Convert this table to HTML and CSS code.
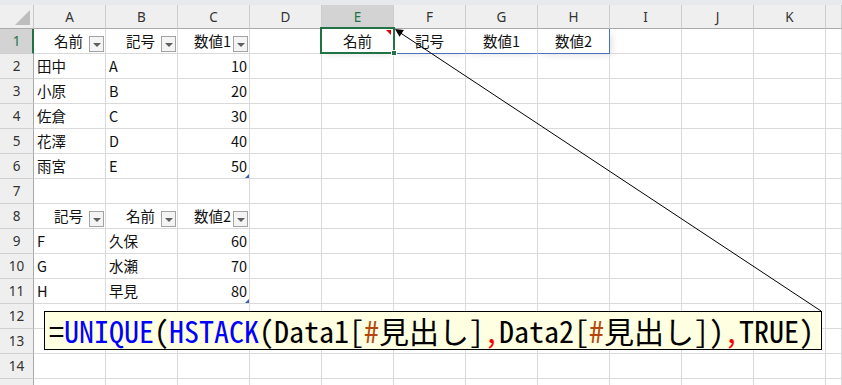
FILE: index.html
```html
<!DOCTYPE html>
<html lang="ja">
<head>
<meta charset="utf-8">
<title>Sheet</title>
<link rel="stylesheet" href="styles.css">
</head>
<body>
<div class="page">
  <div class="strip"></div>
  <div class="sheet">
    <div class="row head">
      <div class="rh corner"><svg width="33" height="23" viewBox="0 0 33 23"><polygon points="15,20 30,20 30,5" fill="#bdbdbd"/></svg></div>
      <div class="ch">A</div><div class="ch">B</div><div class="ch">C</div><div class="ch">D</div>
      <div class="ch sel">E</div><div class="ch">F</div><div class="ch">G</div><div class="ch">H</div>
      <div class="ch">I</div><div class="ch">J</div><div class="ch">K</div><div class="ch last"></div>
    </div>
    <div class="row">
      <div class="rh sel">1</div>
      <div class="c th">名前<span class="fb"></span></div>
      <div class="c th">記号<span class="fb"></span></div>
      <div class="c th">数値1<span class="fb"></span></div>
      <div class="c"></div>
      <div class="c ctr spill active">名前<span class="note"></span><span class="cursor"><span class="handle"></span></span></div>
      <div class="c ctr spill">記号</div>
      <div class="c ctr spill">数値1</div>
      <div class="c ctr spill end">数値2</div>
      <div class="c"></div><div class="c"></div><div class="c"></div><div class="c last"></div>
    </div>
    <div class="row">
      <div class="rh">2</div>
      <div class="c">田中</div><div class="c">A</div><div class="c num">10</div>
      <div class="c"></div><div class="c"></div><div class="c"></div><div class="c"></div><div class="c"></div><div class="c"></div><div class="c"></div><div class="c"></div><div class="c last"></div>
    </div>
    <div class="row">
      <div class="rh">3</div>
      <div class="c">小原</div><div class="c">B</div><div class="c num">20</div>
      <div class="c"></div><div class="c"></div><div class="c"></div><div class="c"></div><div class="c"></div><div class="c"></div><div class="c"></div><div class="c"></div><div class="c last"></div>
    </div>
    <div class="row">
      <div class="rh">4</div>
      <div class="c">佐倉</div><div class="c">C</div><div class="c num">30</div>
      <div class="c"></div><div class="c"></div><div class="c"></div><div class="c"></div><div class="c"></div><div class="c"></div><div class="c"></div><div class="c"></div><div class="c last"></div>
    </div>
    <div class="row">
      <div class="rh">5</div>
      <div class="c">花澤</div><div class="c">D</div><div class="c num">40</div>
      <div class="c"></div><div class="c"></div><div class="c"></div><div class="c"></div><div class="c"></div><div class="c"></div><div class="c"></div><div class="c"></div><div class="c last"></div>
    </div>
    <div class="row">
      <div class="rh">6</div>
      <div class="c">雨宮</div><div class="c">E</div><div class="c num">50<span class="rz"></span></div>
      <div class="c"></div><div class="c"></div><div class="c"></div><div class="c"></div><div class="c"></div><div class="c"></div><div class="c"></div><div class="c"></div><div class="c last"></div>
    </div>
    <div class="row">
      <div class="rh">7</div>
      <div class="c"></div><div class="c"></div><div class="c"></div>
      <div class="c"></div><div class="c"></div><div class="c"></div><div class="c"></div><div class="c"></div><div class="c"></div><div class="c"></div><div class="c"></div><div class="c last"></div>
    </div>
    <div class="row">
      <div class="rh">8</div>
      <div class="c th">記号<span class="fb"></span></div>
      <div class="c th">名前<span class="fb"></span></div>
      <div class="c th">数値2<span class="fb"></span></div>
      <div class="c"></div><div class="c"></div><div class="c"></div><div class="c"></div><div class="c"></div><div class="c"></div><div class="c"></div><div class="c"></div><div class="c last"></div>
    </div>
    <div class="row">
      <div class="rh">9</div>
      <div class="c">F</div><div class="c">久保</div><div class="c num">60</div>
      <div class="c"></div><div class="c"></div><div class="c"></div><div class="c"></div><div class="c"></div><div class="c"></div><div class="c"></div><div class="c"></div><div class="c last"></div>
    </div>
    <div class="row">
      <div class="rh">10</div>
      <div class="c">G</div><div class="c">水瀬</div><div class="c num">70</div>
      <div class="c"></div><div class="c"></div><div class="c"></div><div class="c"></div><div class="c"></div><div class="c"></div><div class="c"></div><div class="c"></div><div class="c last"></div>
    </div>
    <div class="row">
      <div class="rh">11</div>
      <div class="c">H</div><div class="c">早見</div><div class="c num">80<span class="rz"></span></div>
      <div class="c"></div><div class="c"></div><div class="c"></div><div class="c"></div><div class="c"></div><div class="c"></div><div class="c"></div><div class="c"></div><div class="c last"></div>
    </div>
    <div class="row">
      <div class="rh">12</div>
      <div class="c"></div><div class="c"></div><div class="c"></div>
      <div class="c"></div><div class="c"></div><div class="c"></div><div class="c"></div><div class="c"></div><div class="c"></div><div class="c"></div><div class="c"></div><div class="c last"></div>
    </div>
    <div class="row">
      <div class="rh">13</div>
      <div class="c"></div><div class="c"></div><div class="c"></div>
      <div class="c"></div><div class="c"></div><div class="c"></div><div class="c"></div><div class="c"></div><div class="c"></div><div class="c"></div><div class="c"></div><div class="c last"></div>
    </div>
    <div class="row">
      <div class="rh">14</div>
      <div class="c"></div><div class="c"></div><div class="c"></div>
      <div class="c"></div><div class="c"></div><div class="c"></div><div class="c"></div><div class="c"></div><div class="c"></div><div class="c"></div><div class="c"></div><div class="c last"></div>
    </div>
    <div class="row">
      <div class="rh"></div>
      <div class="c"></div><div class="c"></div><div class="c"></div>
      <div class="c"></div><div class="c"></div><div class="c"></div><div class="c"></div><div class="c"></div><div class="c"></div><div class="c"></div><div class="c"></div><div class="c last"></div>
    </div>
  </div>

  <svg class="leader" width="842" height="385" viewBox="0 0 842 385">
    <line x1="399" y1="32" x2="821" y2="311" stroke="#000" stroke-width="1"/>
    <polygon points="395,29 399.5,36.7 403.9,30.1" fill="#000"/>
  </svg>

  <div class="comment"><span class="k">=</span><span class="fn">UNIQUE</span>(<span class="fn">HSTACK</span>(Data1[<span class="hash">#</span>見出し]<span class="sep">,</span>Data2[<span class="hash">#</span>見出し])<span class="sep">,</span>TRUE)</div>
</div>
</body>
</html>
```

FILE: styles.css
```css
* { box-sizing: border-box; }
html, body { margin: 0; padding: 0; background: #fff; }
.page {
  position: relative;
  width: 842px;
  height: 385px;
  overflow: hidden;
  font-family: "Noto Sans CJK JP", "Noto Sans", sans-serif;
}
.strip { height: 5px; background: #e7e9ec; }
.sheet { display: flex; flex-direction: column; }
.row { display: flex; height: 25px; }
.row.head { height: 24px; }

.rh {
  width: 34px;
  flex: none;
  background: #efefef;
  border-right: 1px solid #a9a9a9;
  border-bottom: 1px solid #d0d0d0;
  color: #333;
  font-family: "Noto Sans", sans-serif;
  font-size: 13.5px;
  display: flex;
  align-items: center;
  justify-content: center;
}
.rh.sel {
  background: #d3d3d3;
  color: #217346;
  border-right: 2px solid #217346;
  padding-left: 1px;
}
.rh.corner {
  border-bottom: 1px solid #a9a9a9;
  border-right: 1px solid #c8c8c8;
  display: block;
}
.rh.corner svg { display: block; }

.ch {
  width: 72px;
  flex: none;
  background: #efefef;
  border-right: 1px solid #cdcdcd;
  border-bottom: 1px solid #a9a9a9;
  color: #333;
  font-family: "Noto Sans", sans-serif;
  font-size: 13.5px;
  display: flex;
  align-items: center;
  justify-content: center;
}
.ch.sel { background: #d3d3d3; color: #217346; border-bottom: 1px solid #217346; }
.ch.last, .c.last { flex: 1; width: auto; }

.c {
  position: relative;
  width: 72px;
  flex: none;
  border-right: 1px solid #dadada;
  border-bottom: 1px solid #dadada;
  font-size: 14.5px;
  color: #111;
  line-height: 23px;
  padding: 0 3px 0 3px;
  white-space: nowrap;
}
.c.num { text-align: right; padding-right: 2px; }
.c.ctr { text-align: center; }
.c.th { text-align: center; padding-left: 1px; }

.fb {
  position: absolute;
  right: 1px;
  top: 7px;
  width: 15px;
  height: 16px;
  border: 1px solid #a3a3a3;
  background: #f4f4f4;
}
.fb::after {
  content: "";
  position: absolute;
  left: 3px;
  top: 6px;
  border-top: 4px solid #5f5f5f;
  border-left: 4px solid transparent;
  border-right: 4px solid transparent;
}

.spill { border-bottom-color: #4a72c0; box-shadow: 0 4px 6px -3px rgba(0,0,0,0.10); }
.spill.end { border-right-color: #4a72c0; box-shadow: 4px 3px 7px -2px rgba(0,0,0,0.12); }
.active { z-index: 2; }
.cursor {
  position: absolute;
  left: -2px;
  top: -2px;
  right: -2px;
  bottom: -1px;
  border: 2px solid #217346;
}
.handle {
  position: absolute;
  right: -4px;
  bottom: -4px;
  width: 6px;
  height: 6px;
  background: #217346;
  border: 1px solid #fff;
}
.note {
  position: absolute;
  right: 2px;
  top: 1px;
  width: 0;
  height: 0;
  border-top: 5px solid #e00000;
  border-left: 5px solid transparent;
}
.rz {
  position: absolute;
  right: 0;
  bottom: 0;
  width: 0;
  height: 0;
  border-bottom: 4px solid #3b5bb5;
  border-left: 4px solid transparent;
}

.leader {
  position: absolute;
  left: 0;
  top: 0;
  pointer-events: none;
  z-index: 3;
}
.comment {
  position: absolute;
  left: 44px;
  top: 311px;
  width: 778px;
  height: 39px;
  background: #ffffe1;
  border: 1px solid #000;
  z-index: 4;
  font-family: "Noto Sans Mono CJK JP", "Noto Sans CJK JP", "Liberation Mono", monospace;
  font-size: 30px;
  font-weight: 300;
  line-height: 37px;
  padding-left: 4px;
  color: #000;
  white-space: nowrap;
}
.fn { color: #0000ff; }
.hash { color: #b5470e; }
.sep { color: #ff0000; }
```
